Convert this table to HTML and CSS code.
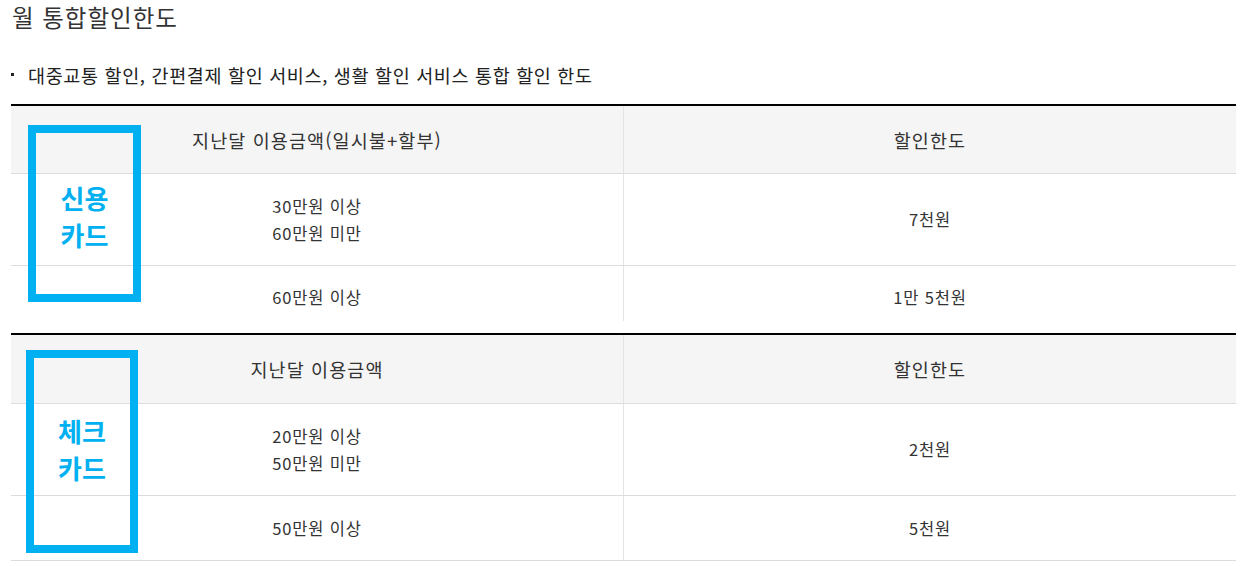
FILE: index.html
```html
<!DOCTYPE html>
<html lang="ko">
<head>
<meta charset="utf-8">
<title>월 통합할인한도</title>
<link rel="stylesheet" href="styles.css">
</head>
<body>
<div class="page">
  <h2 class="title">월 통합할인한도</h2>
  <ul class="notes">
    <li>대중교통 할인, 간편결제 할인 서비스, 생활 할인 서비스 통합 할인 한도</li>
  </ul>

  <section class="limit credit">
    <table class="limit-table">
      <thead>
        <tr><th>지난달 이용금액(일시불+할부)</th><th>할인한도</th></tr>
      </thead>
      <tbody>
        <tr class="row-tall"><td>30만원 이상<br>60만원 미만</td><td>7천원</td></tr>
        <tr class="row-cut"><td>60만원 이상</td><td>1만 5천원</td></tr>
      </tbody>
    </table>
    <div class="mark mark-credit"><span>신용<br>카드</span></div>
  </section>

  <section class="limit check">
    <table class="limit-table">
      <thead>
        <tr><th class="th-tall">지난달 이용금액</th><th class="th-tall">할인한도</th></tr>
      </thead>
      <tbody>
        <tr class="row-tall"><td>20만원 이상<br>50만원 미만</td><td>2천원</td></tr>
        <tr class="row-short"><td>50만원 이상</td><td>5천원</td></tr>
      </tbody>
    </table>
    <div class="mark mark-check"><span>체크<br>카드</span></div>
  </section>
</div>
</body>
</html>
```

FILE: styles.css
```css
html, body {
  margin: 0;
  padding: 0;
  background: #fff;
}

body {
  font-family: "Noto Sans CJK KR", "Noto Sans", sans-serif;
  color: #333;
}

.page {
  padding: 0 9px 0 11px;
}

.title {
  margin: 0;
  padding: 0 0 0 1px;
  font-size: 23.5px;
  font-weight: 400;
  letter-spacing: 1px;
  line-height: 34px;
  color: #333;
}

.notes {
  list-style: none;
  margin: 25px 0 0 0;
  padding: 0;
}

.notes li {
  position: relative;
  padding-left: 17px;
  font-size: 18.5px;
  letter-spacing: 0.65px;
  line-height: 32px;
  color: #222;
}

.notes li::before {
  content: "";
  position: absolute;
  left: 0;
  top: 14px;
  width: 3px;
  height: 3px;
  background: #222;
}

.limit {
  position: relative;
}

.credit {
  margin-top: 13px;
}

.check {
  margin-top: 12px;
}

.limit-table {
  width: 100%;
  border-collapse: collapse;
  table-layout: fixed;
  border-top: 2px solid #000;
}

.limit-table th,
.limit-table td {
  width: 50%;
  text-align: center;
  vertical-align: middle;
  padding: 0;
  font-size: 16.5px;
  letter-spacing: 0.8px;
  color: #333;
  border-bottom: 1px solid #dcdcdc;
}

.limit-table th + th,
.limit-table td + td {
  border-left: 1px solid #e4e4e4;
}

.limit-table th {
  height: 67px;
  background: #f5f5f5;
  font-weight: 400;
  font-size: 18.5px;
  letter-spacing: 1.1px;
}

.limit-table .th-tall {
  height: 68px;
}

.row-tall td {
  height: 91px;
  line-height: 27px;
}

.row-short td {
  height: 64px;
}

.row-cut td {
  height: 37px;
  padding-top: 18px;
  line-height: 27px;
  vertical-align: top;
  border-bottom: 0;
}

.mark {
  position: absolute;
  box-sizing: border-box;
  border: 8px solid #00b0f0;
  display: flex;
  align-items: center;
  justify-content: center;
  color: #00b0f0;
  font-size: 26px;
  font-weight: 700;
  line-height: 37px;
  text-align: center;
}

.mark-credit {
  left: 17px;
  top: 21px;
  width: 113px;
  height: 177px;
  padding-top: 4px;
}

.mark-check {
  left: 15px;
  top: 17px;
  width: 112px;
  height: 203px;
  padding-bottom: 5px;
}
```
